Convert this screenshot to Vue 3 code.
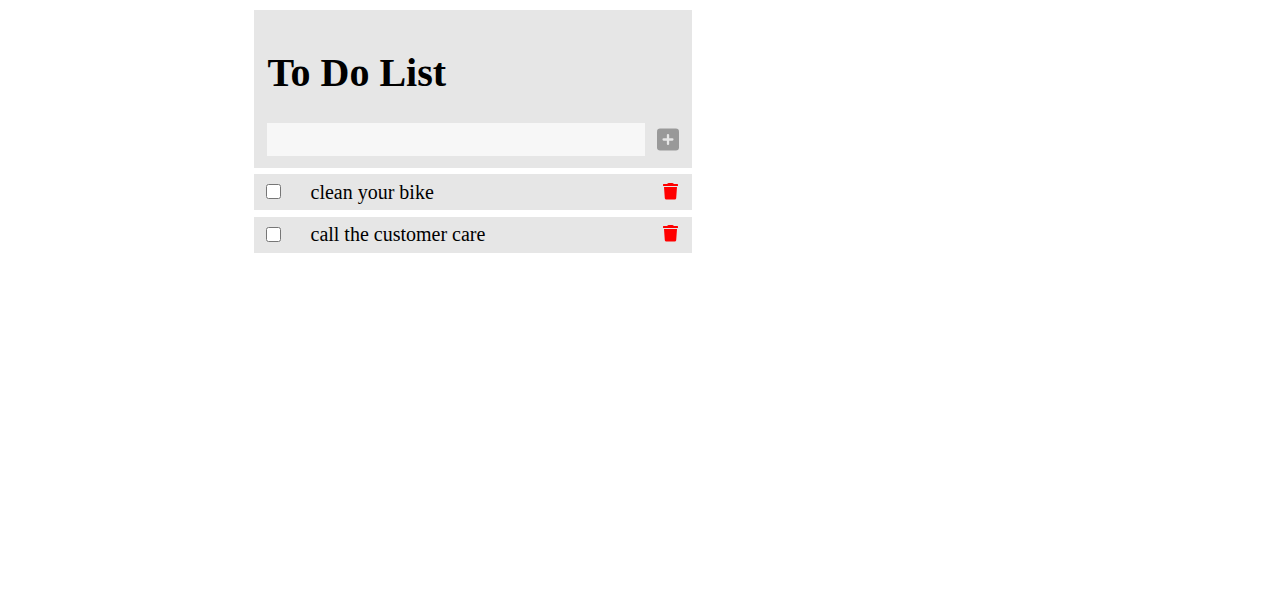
<script setup>
import { ref } from 'vue'

const draft = ref('')
const items = ref([
  { id: 1, text: 'clean your bike', done: false },
  { id: 2, text: 'call the customer care', done: false },
])

function add() {
  const text = draft.value.trim()
  if (!text) return
  items.value.push({ id: Date.now(), text, done: false })
  draft.value = ''
}

function remove(id) {
  items.value = items.value.filter((item) => item.id !== id)
}
</script>

<template>
  <main class="todo">
    <header class="head">
      <h1>To Do List</h1>
      <form class="entry" @submit.prevent="add">
        <input v-model="draft" class="field" type="text" aria-label="New task" />
        <button class="add" type="submit" aria-label="Add">
          <svg width="22" height="23" viewBox="0 0 22 23">
            <rect y="0.5" width="22" height="22" rx="3.2" fill="#999" />
            <path d="M11 7.1v8.8M6.6 11.5h8.8" stroke="#e6e6e6" stroke-width="2.3" stroke-linecap="round" />
          </svg>
        </button>
      </form>
    </header>
    <div v-for="item in items" :key="item.id" class="row">
      <input v-model="item.done" class="check" type="checkbox" :aria-label="item.text" />
      <span class="label">{{ item.text }}</span>
      <button class="trash" aria-label="Delete" @click="remove(item.id)">
        <svg width="15" height="17" viewBox="0 0 15 17">
          <path d="M0 1.6Q0 1 .6 1H4L4.6.4Q5 0 5.6 0H9.4Q10 0 10.4.4L11 1H14.4Q15 1 15 1.6V2.4Q15 3 14.4 3H.6Q0 3 0 2.4ZM1 4H14L13.2 15.2Q13 16.6 11.6 16.6H3.4Q2 16.6 1.8 15.2Z" fill="#f00" />
        </svg>
      </button>
    </div>
  </main>
</template>

<style>
body {
  margin: 0;
  background: #fff;
}
</style>

<style scoped>
.todo {
  width: 438px;
  margin-left: 254px;
  padding-top: 10px;
  font-family: "Liberation Serif", "Times New Roman", serif;
  color: #000;
}
.head {
  box-sizing: border-box;
  height: 158px;
  padding: 40px 13px 0;
  background: #e6e6e6;
}
h1 {
  margin: 0 0 27px 0.5px;
  font-size: 40px;
  line-height: 46px;
  font-weight: bold;
}
.entry {
  display: flex;
  align-items: center;
  gap: 12px;
}
.field {
  box-sizing: border-box;
  width: 378px;
  height: 33px;
  padding: 0 8px;
  border: 0;
  outline: 0;
  background: #f7f7f7;
  font: 20px "Liberation Serif", serif;
}
.add,
.trash {
  padding: 0;
  border: 0;
  background: none;
}
svg {
  display: block;
}
.row {
  display: flex;
  align-items: center;
  box-sizing: border-box;
  height: 36px;
  margin-top: 6px;
  padding: 0 14px 0 12px;
  background: #e6e6e6;
}
.row + .row {
  margin-top: 7px;
}
.check {
  width: 15px;
  height: 15px;
  margin: 0 29.5px 1px 0;
}
.label {
  flex: 1;
  font-size: 20px;
  line-height: 36px;
}
.trash {
  margin-bottom: 2px;
}
.row + .row .label {
  margin-bottom: 2px;
}
.row + .row .trash {
  margin-bottom: 4px;
}
</style>
